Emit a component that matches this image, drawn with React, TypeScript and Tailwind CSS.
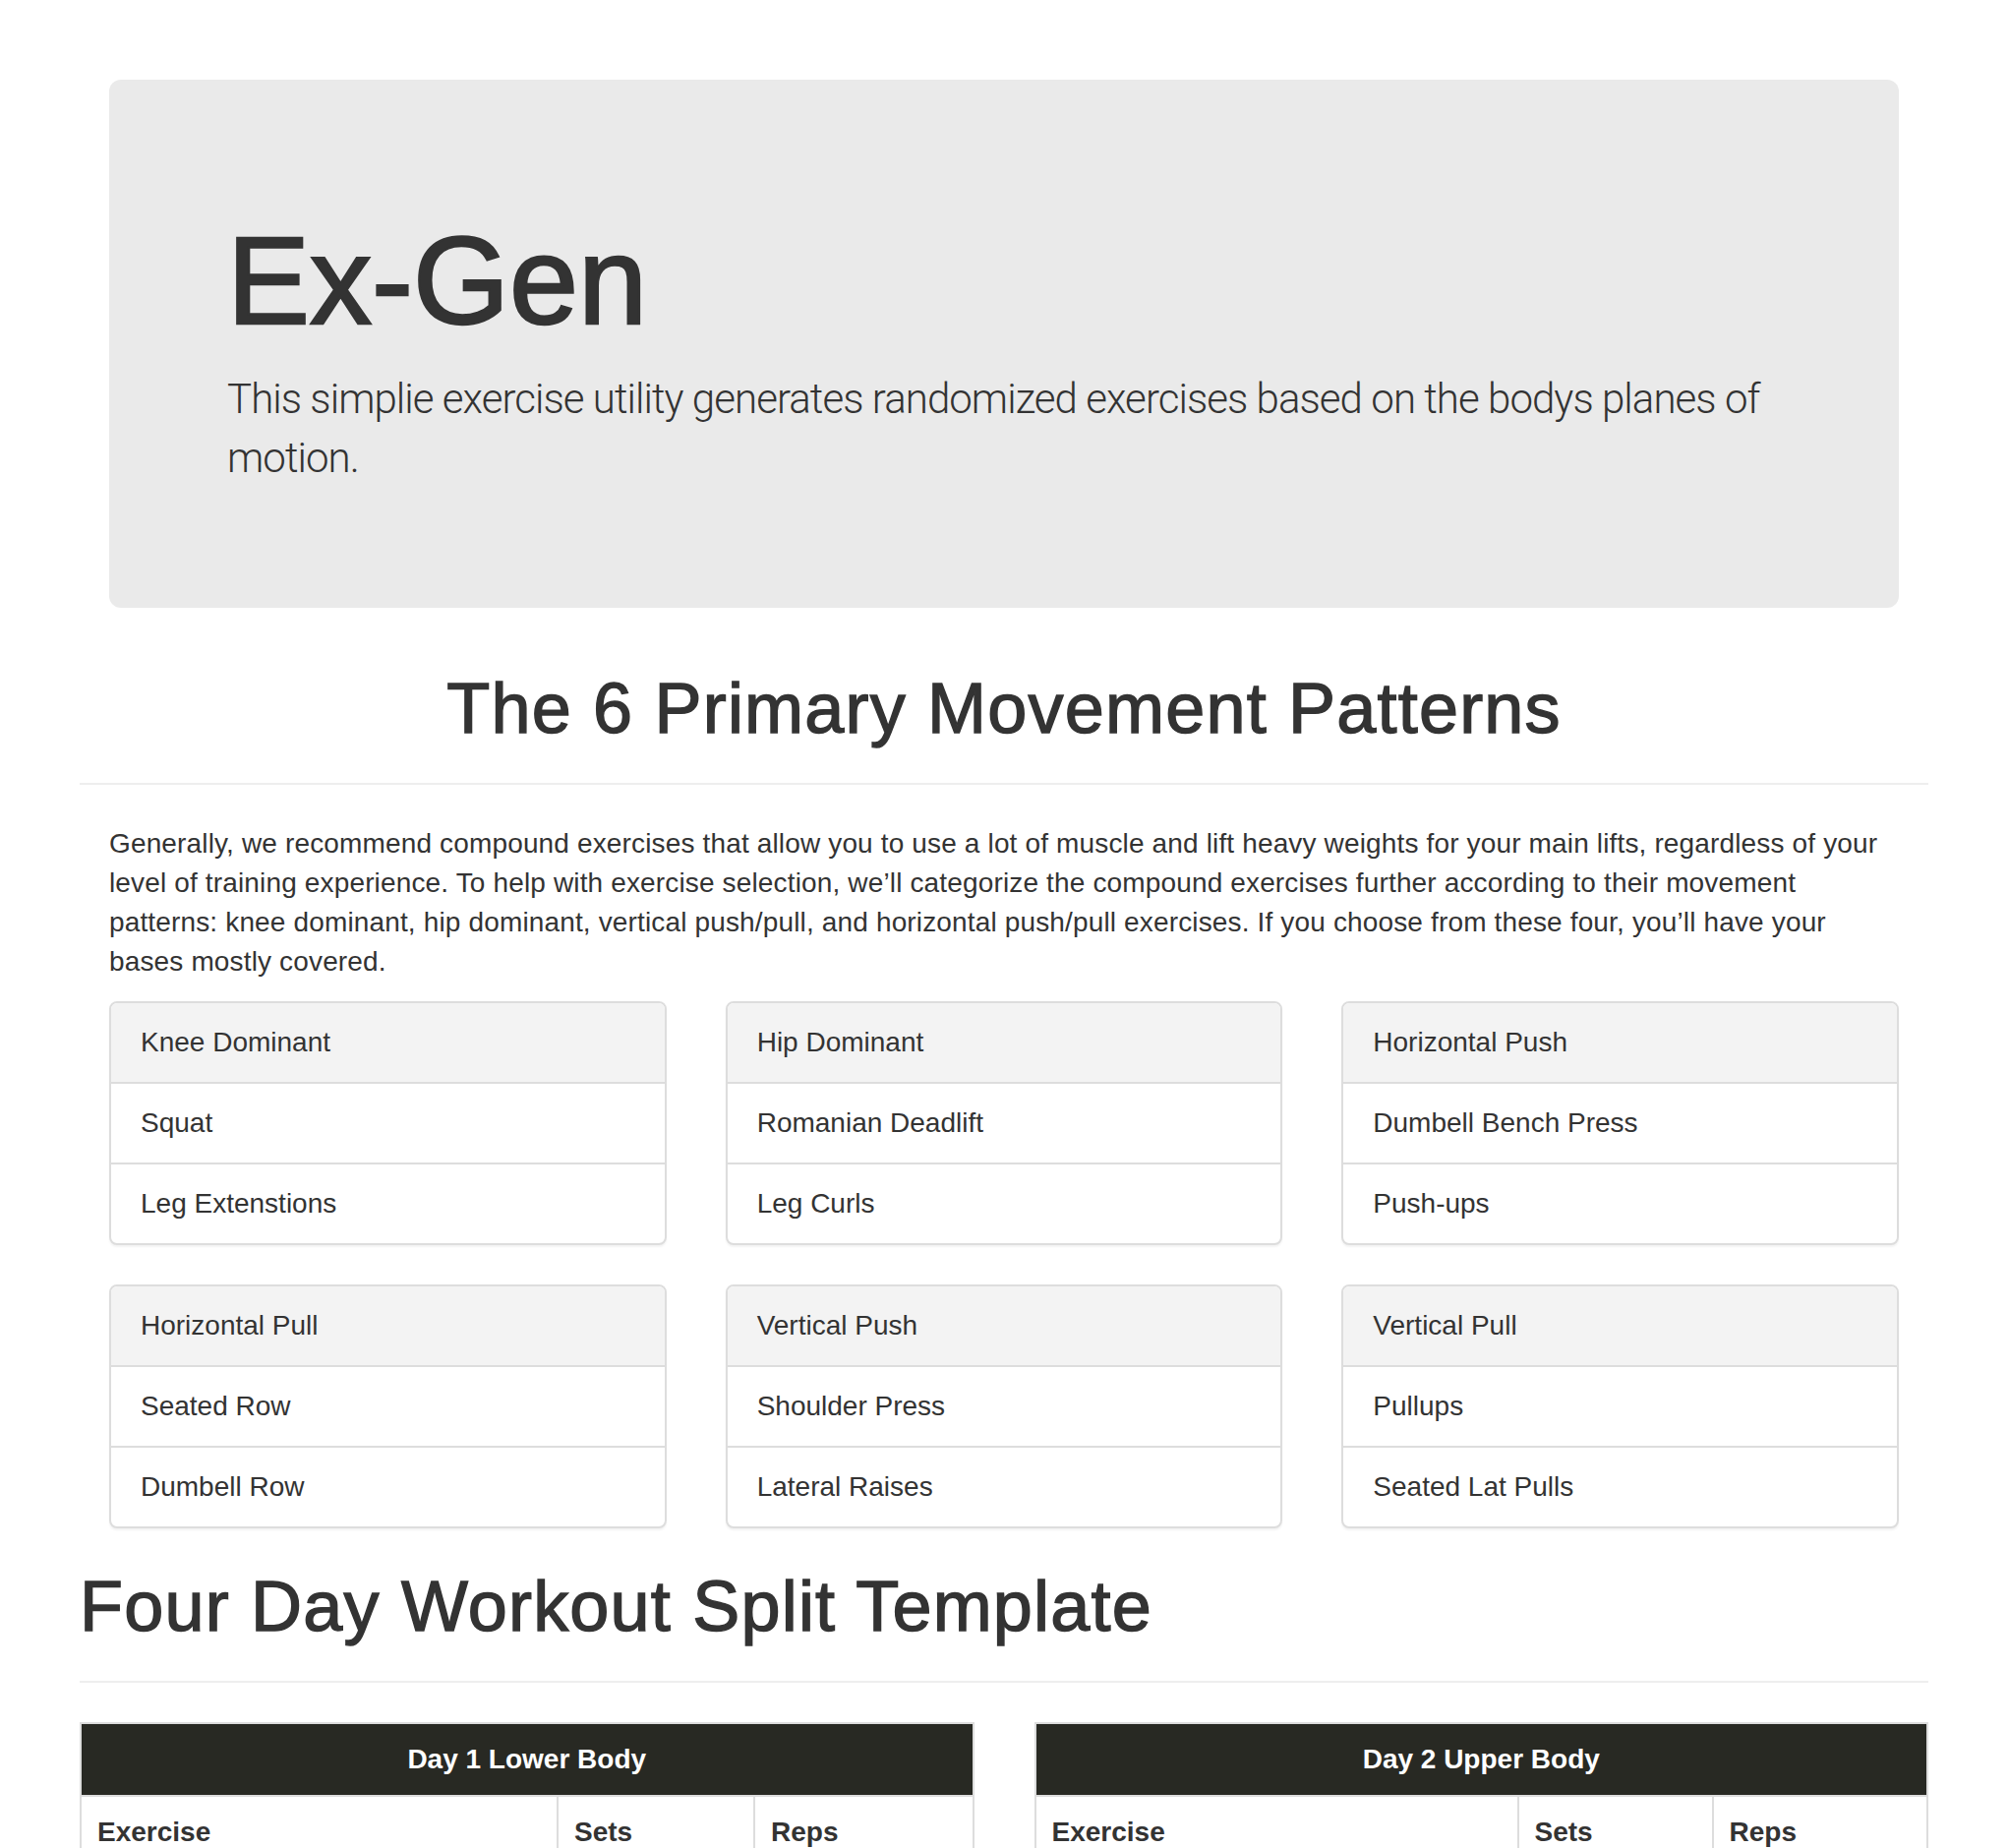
type Pattern = {
  title: string;
  items: string[];
};

const patterns: Pattern[] = [
  { title: "Knee Dominant", items: ["Squat", "Leg Extenstions"] },
  { title: "Hip Dominant", items: ["Romanian Deadlift", "Leg Curls"] },
  { title: "Horizontal Push", items: ["Dumbell Bench Press", "Push-ups"] },
  { title: "Horizontal Pull", items: ["Seated Row", "Dumbell Row"] },
  { title: "Vertical Push", items: ["Shoulder Press", "Lateral Raises"] },
  { title: "Vertical Pull", items: ["Pullups", "Seated Lat Pulls"] },
];

const days = [
  {
    title: "Day 1 Lower Body",
    cols: ["w-[485px]", "w-[200px]", ""],
    rows: [
      ["Squat", "4", "6-8"],
      ["Romanian Deadlift", "4", "8-10"],
      ["Leg Extenstions", "3", "12-15"],
      ["Leg Curls", "3", "12-15"],
    ],
  },
  {
    title: "Day 2 Upper Body",
    cols: ["w-[491px]", "w-[198px]", ""],
    rows: [
      ["Dumbell Bench Press", "4", "8-10"],
      ["Seated Row", "4", "8-10"],
      ["Shoulder Press", "3", "10-12"],
      ["Pullups", "3", "8-10"],
    ],
  },
];

function PatternCard({ title, items }: Pattern) {
  return (
    <div className="rounded-[8px] border-2 border-[#ddd] bg-white shadow-[0_2px_2px_rgba(0,0,0,0.05)] overflow-hidden">
      <div className="bg-[#f3f3f3] px-[30px] py-[20px] border-b-2 border-[#ddd]">{title}</div>
      {items.map((item, i) => (
        <div
          key={item}
          className={`px-[30px] py-[20px] ${i > 0 ? "border-t-2 border-[#ddd]" : ""}`}
        >
          {item}
        </div>
      ))}
    </div>
  );
}

function DayTable({ title, cols, rows }: (typeof days)[number]) {
  return (
    <table className="w-full border-collapse border-2 border-[#ddd] mb-[40px]">
      <thead>
        <tr>
          <th
            colSpan={3}
            className="bg-[#282923] text-white font-bold text-center p-[16px] border-2 border-[#ddd]"
          >
            {title}
          </th>
        </tr>
        <tr>
          <th className={`${cols[0]} text-left font-bold p-[16px] border-2 border-[#ddd]`}>Exercise</th>
          <th className={`${cols[1]} text-left font-bold p-[16px] border-2 border-[#ddd]`}>Sets</th>
          <th className="text-left font-bold p-[16px] border-2 border-[#ddd]">Reps</th>
        </tr>
      </thead>
      <tbody>
        {rows.map((r) => (
          <tr key={r[0]}>
            {r.map((c, i) => (
              <td key={i} className="p-[16px] border-2 border-[#ddd]">
                {c}
              </td>
            ))}
          </tr>
        ))}
      </tbody>
    </table>
  );
}

export default function App() {
  return (
    <div className="min-h-screen bg-white text-[#333] text-[28px] leading-[40px] font-['Liberation_Sans',Helvetica,Arial,sans-serif]">
      <div className="mx-auto w-[1940px] px-[30px] pt-[81px]">
        <div className="px-[30px]">
          <div className="rounded-[12px] bg-[#eaeaea] px-[120px] py-[96px]">
            <h1 className="mt-[40px] mb-[20px] text-[126px] leading-[1.1] [-webkit-text-stroke:2.4px_#333]">
              Ex-Gen
            </h1>
            <p className="mb-[26px] text-[42px] leading-[60px] font-light tracking-[-0.95px] font-['Roboto',sans-serif]">
              This simplie exercise utility generates randomized exercises based on the bodys planes of
              motion.
            </p>
          </div>
        </div>

        <div className="mt-[63px] pb-[36px] border-b-2 border-[#eee]">
          <h1 className="text-center text-[72px] leading-[79px] tracking-[1.2px] [-webkit-text-stroke:1.4px_#333]">
            The 6 Primary Movement Patterns
          </h1>
        </div>

        <div className="px-[30px]">
          <p className="mt-[40px] mb-[20px] tracking-[0.15px]">
            Generally, we recommend compound exercises that allow you to use a lot of muscle and lift
            heavy weights for your main lifts, regardless of your level of training experience. To help
            with exercise selection, we’ll categorize the compound exercises further according to their
            movement patterns: knee dominant, hip dominant, vertical push/pull, and horizontal push/pull
            exercises. If you choose from these four, you’ll have your bases mostly covered.
          </p>
          <div className="grid grid-cols-3 gap-x-[60px] gap-y-[40px]">
            {patterns.map((p) => (
              <PatternCard key={p.title} {...p} />
            ))}
          </div>
        </div>

        <div className="mt-[40px] pb-[36px] border-b-2 border-[#eee]">
          <h1 className="text-[72px] leading-[79px] tracking-[1.2px] [-webkit-text-stroke:1.4px_#333]">
            Four Day Workout Split Template
          </h1>
        </div>

        <div className="mt-[40px] grid grid-cols-2 gap-x-[61px]">
          {days.map((d) => (
            <DayTable key={d.title} {...d} />
          ))}
        </div>
      </div>
    </div>
  );
}
